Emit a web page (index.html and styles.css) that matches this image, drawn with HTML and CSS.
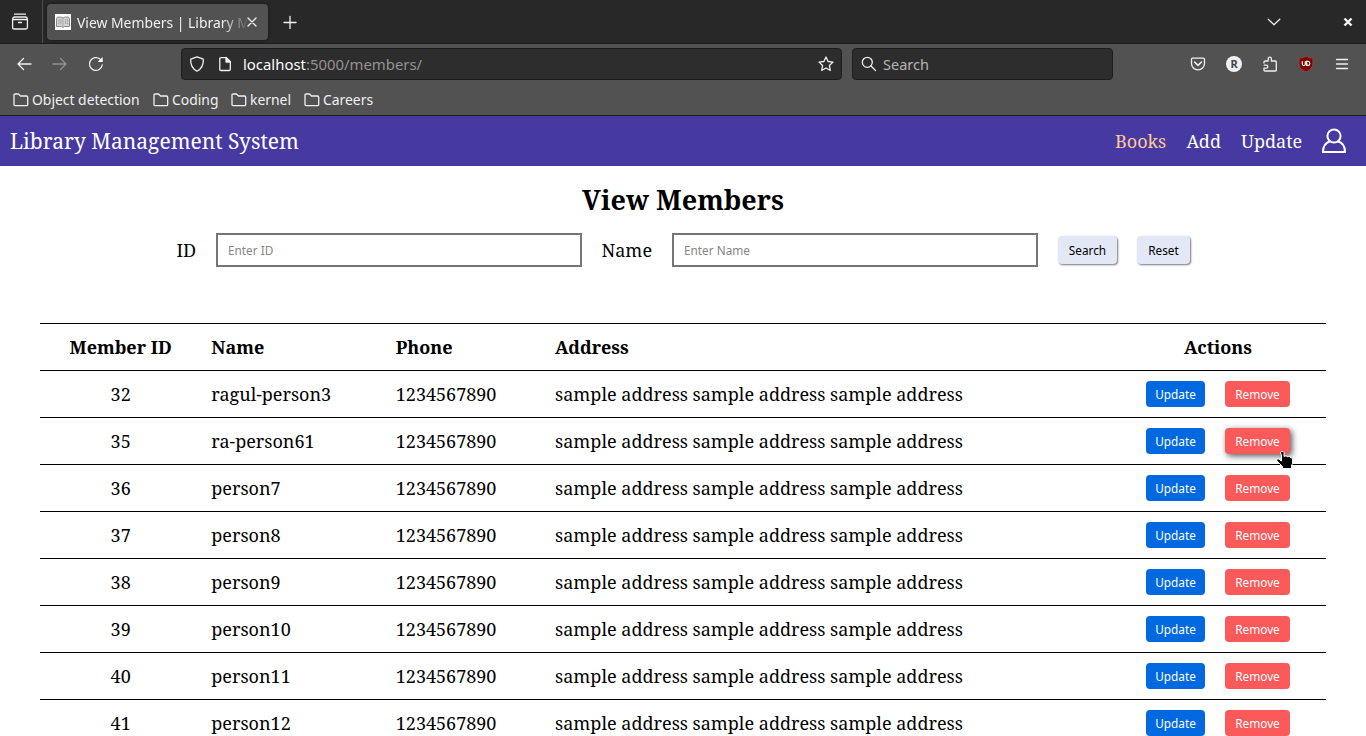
FILE: index.html
```html
<!DOCTYPE html>
<html lang="en">
<head>
<meta charset="utf-8">
<title>View Members | Library Management System</title>
<link rel="stylesheet" href="styles.css">
</head>
<body>
<header class="browser">
  <div class="tabbar">
    <div class="recent"><svg width="18" height="18" viewBox="0 0 18 18" class="ic"><path d="M3.500 1.200h11M1.800 6.500V5.500Q1.800 4 3.500 4h11Q16.200 4 16.200 5.500v1M1.600 6.500h14.800v8q0 1.500-1.500 1.500H3.100q-1.500 0-1.500-1.500zM7.500 9.500h3"/></svg></div>
    <div class="tab">
      <svg class="favicon" width="16" height="16" viewBox="0 0 16 16"><path fill="#fff" d="M0 0h16v16H0z"/><path fill="#d2d2d2" stroke="#8a8a8a" d="M1.500 4.500Q1.500 3 4 3q3 0 4 1 1-1 4-1 2.500 0 2.500 1.500v8H9.500L8 13.500 6.500 12.500h-5z"/><path stroke="#aaa" d="M8 4v9M4 5v5M6 5v5M10.500 5v5M12.500 5v5"/></svg>
      <span class="tab-title">View Members | Library M</span>
      <svg class="ic tab-close" width="10" height="10" viewBox="0 0 10 10"><path d="M1 1l8 8M9 1L1 9"/></svg>
    </div>
    <svg class="ic newtab" width="14" height="14" viewBox="0 0 14 14"><path d="M7 1.500v12M1 7.500h12"/></svg>
    <svg class="ic chevron" width="14" height="8" viewBox="0 0 14 8"><path d="M1.200 1.200L7 6.800l5.800-5.600"/></svg>
    <svg class="winclose" width="10" height="10" viewBox="0 0 10 10"><path d="M1.500 1.500l7 7M8.500 1.500l-7 7"/></svg>
  </div>
  <div class="toolbar">
    <div class="navs">
      <svg class="ic" width="16" height="16" viewBox="0 0 16 16"><path d="M15 8H2M7.500 2.500L2 8l5.500 5.500"/></svg>
      <svg class="ic dim" width="16" height="16" viewBox="0 0 16 16"><path d="M1 8h13M8.500 2.500L14 8l-5.500 5.500"/></svg>
      <svg class="ic" width="16" height="16" viewBox="0 0 16 16"><path d="M14.200 9A6.400 6.400 0 1 1 12 3.100L14 5"/><path d="M14.600 1v5H9.600z" fill="#fbfbfe" stroke="none"/></svg>
    </div>
    <div class="urlbar">
      <svg class="ic" width="16" height="16" viewBox="0 0 16 16"><path d="M8 .8L14.300 3.200Q14.800 11.500 8 15.200 1.200 11.500 1.700 3.200z"/></svg>
      <svg class="ic page" width="14" height="16" viewBox="0 0 14 16"><path d="M3 1.700h5.300l4 4v7.600q0 1.200-1.200 1.200H3q-1.200 0-1.200-1.200V2.900Q1.800 1.700 3 1.700z"/><path d="M8 1.500v4.500h4.500z" fill="#fbfbfe"/></svg>
      <span class="url">localhost<i>:5000/members/</i></span>
      <svg class="ic star" width="16" height="16" viewBox="0 0 16 16"><path d="M8 1l2.100 4.500 4.900.6-3.600 3.400.9 4.900L8 12l-4.300 2.400.9-4.900L1 6.100l4.900-.6z"/></svg>
    </div>
    <div class="searchbar">
      <svg class="ic" width="16" height="16" viewBox="0 0 16 16"><circle cx="6.300" cy="6.300" r="5"/><path d="M10 10l4.500 4.500"/></svg>
      <span class="search-text">Search</span>
    </div>
    <div class="exts">
      <svg class="ic" width="16" height="16" viewBox="0 0 16 16"><path d="M2.500 2.200h11q1 0 1 1V7.500a6.500 6.300 0 0 1-13 0V3.200q0-1 1-1z"/><path d="M4.500 6L8 9.300 11.500 6" stroke-width="1.600"/></svg>
      <svg width="16" height="16" viewBox="0 0 16 16"><circle cx="8" cy="8" r="8" fill="#f0f0f0"/><text x="8" y="12" class="badge-r">R</text></svg>
      <svg class="ic" width="16" height="16" viewBox="0 0 16 16"><path d="M2 7V6q0-1 1-1h3.200V3Q6.200 1.200 7.800 1.200T9.400 3v2h3.900q1 0 1 1v8.200q0 .8-1 .8H3q-1 0-1-.8v-2h2.200q1.600 0 1.600-1.500T4.200 9.200H2.200"/></svg>
      <svg width="16" height="16" viewBox="0 0 16 16"><path fill="#800000" stroke="#a24c4c" stroke-width=".6" d="M8 .5Q11 2 14.800 2.200V8q0 5-6.800 7.800Q1.200 13 1.200 8V2.200Q5 2 8 .5z"/><path fill="none" stroke="#fff" stroke-width="1.200" d="M4.300 5.300v3q0 1.200 1.500 1.200t1.500-1.200v-3M8.700 5.400h1.500q1.600 0 1.600 2t-1.600 2H8.700z"/></svg>
      <svg class="ic" width="16" height="16" viewBox="0 0 16 16"><path d="M2.500 3.500h11M2.500 8h11M2.500 12.500h11"/></svg>
    </div>
  </div>
  <nav class="bookmarks">
    <span class="bm b1"><svg class="ic" width="16" height="14" viewBox="0 0 16 14"><path d="M1 2.200Q1 1 2.200 1h3.300L7.500 3h6q1.200 0 1.200 1.200v7.300q0 1.200-1.200 1.200H2.200Q1 12.700 1 11.500z"/></svg><b>Object detection</b></span>
    <span class="bm b2"><svg class="ic" width="16" height="14" viewBox="0 0 16 14"><path d="M1 2.200Q1 1 2.200 1h3.300L7.500 3h6q1.200 0 1.200 1.200v7.300q0 1.200-1.200 1.200H2.200Q1 12.700 1 11.500z"/></svg><b>Coding</b></span>
    <span class="bm b3"><svg class="ic" width="16" height="14" viewBox="0 0 16 14"><path d="M1 2.200Q1 1 2.200 1h3.300L7.500 3h6q1.200 0 1.200 1.200v7.300q0 1.200-1.200 1.200H2.200Q1 12.700 1 11.500z"/></svg><b>kernel</b></span>
    <span class="bm b4"><svg class="ic" width="16" height="14" viewBox="0 0 16 14"><path d="M1 2.200Q1 1 2.200 1h3.300L7.500 3h6q1.200 0 1.200 1.200v7.300q0 1.200-1.200 1.200H2.200Q1 12.700 1 11.500z"/></svg><b>Careers</b></span>
  </nav>
</header>
<nav class="appbar">
  <span class="brand">Library Management System</span>
  <span class="link active l1">Books</span><span class="link l2">Add</span><span class="link l3">Update</span>
  <svg class="user" width="24" height="26" viewBox="0 0 24 26"><path fill="none" stroke="#fff" stroke-width="2" d="M8.500 13.200C3.500 14.500 1 18.500 1 24h22c0-5.500-2.500-9.500-7.500-10.800"/><circle cx="12" cy="8" r="6.600" fill="none" stroke="#fff" stroke-width="2"/></svg>
</nav>
<main>
  <h1>View Members</h1>
  <form class="filters">
    <label class="lid">ID</label><input class="field" placeholder="Enter ID">
    <label class="lname">Name</label><input class="field" placeholder="Enter Name">
    <button type="button" class="soft s1">Search</button><button type="button" class="soft s2">Reset</button>
  </form>
  <div class="table">
    <div class="row head"><span class="id">Member ID</span><span>Name</span><span>Phone</span><span>Address</span><span class="acts">Actions</span></div>
    <div class="row"><span class="id">32</span><span>ragul-person3</span><span>1234567890</span><span>sample address sample address sample address</span><span class="acts"><button class="up">Update</button><button class="rm">Remove</button></span></div>
    <div class="row"><span class="id">35</span><span>ra-person61</span><span>1234567890</span><span>sample address sample address sample address</span><span class="acts"><button class="up">Update</button><button class="rm hover">Remove</button></span></div>
    <div class="row"><span class="id">36</span><span>person7</span><span>1234567890</span><span>sample address sample address sample address</span><span class="acts"><button class="up">Update</button><button class="rm">Remove</button></span></div>
    <div class="row"><span class="id">37</span><span>person8</span><span>1234567890</span><span>sample address sample address sample address</span><span class="acts"><button class="up">Update</button><button class="rm">Remove</button></span></div>
    <div class="row"><span class="id">38</span><span>person9</span><span>1234567890</span><span>sample address sample address sample address</span><span class="acts"><button class="up">Update</button><button class="rm">Remove</button></span></div>
    <div class="row"><span class="id">39</span><span>person10</span><span>1234567890</span><span>sample address sample address sample address</span><span class="acts"><button class="up">Update</button><button class="rm">Remove</button></span></div>
    <div class="row"><span class="id">40</span><span>person11</span><span>1234567890</span><span>sample address sample address sample address</span><span class="acts"><button class="up">Update</button><button class="rm">Remove</button></span></div>
    <div class="row"><span class="id">41</span><span>person12</span><span>1234567890</span><span>sample address sample address sample address</span><span class="acts"><button class="up">Update</button><button class="rm">Remove</button></span></div>
  </div>
</main>
<svg class="cursor" width="18" height="19" viewBox="0 0 18 19"><path fill="#000" stroke="#fff" stroke-width="1" stroke-linejoin="round" d="M4.500 2.500L5.500 1.500H7L8 2.500V6.500L9 6H10.500L11.500 7 12.500 6.500H13.500L14.500 7.500H15.500L16.500 9V13.500L15.500 15.500V18.500H6.500V16.500L2.500 12.500 .8 10.500V9H3L5 11H5.500V6z"/></svg>
</body>
</html>
```

FILE: styles.css
```css
* { box-sizing: border-box; }
html, body { margin: 0; height: 736px; overflow: hidden; }
body { position: relative; background: #fff; color: #000; font-family: "Noto Serif", "Droid Serif", "DejaVu Serif", serif; font-size: 18px; }
svg { display: block; flex: none; }
span, label { white-space: nowrap; }

.browser { height: 116px; background: #525252; border-bottom: 1px solid #1b1b1b; font-family: "Noto Sans", sans-serif; color: #f0f0f0; }
.ic { fill: none; stroke: #f0f0f0; stroke-width: 1.300; stroke-linejoin: round; stroke-linecap: round; }
.dim { opacity: .4; }
.tabbar { height: 44px; background: #282828; border-bottom: 1px solid #1b1b1b; display: flex; align-items: center; }
.recent { width: 43px; height: 43px; border-right: 1px solid #4c4c4c; padding: 13px 0 0 11px; flex: none; }
.tab { width: 221px; height: 36px; margin-left: 4px; background: #525252; border-radius: 4px; display: flex; align-items: center; padding-left: 8px; box-shadow: 0 0 3px #151515; flex: none; }
.tab-title { width: 170px; margin-left: 6px; padding-top: 1px; font-size: 13.900px; -webkit-mask-image: linear-gradient(90deg, #000 145px, transparent 172px); }
.tab-close { margin-left: 0; }
.newtab { margin-left: 15px; }
.chevron { margin-left: auto; }
.winclose { margin: 0 13px 0 62px; fill: none; stroke: #f5f5f5; stroke-width: 2.400; }
.toolbar { height: 40px; display: flex; align-items: center; }
.navs { width: 181px; padding-left: 16px; display: flex; gap: 20px; flex: none; }
.urlbar, .searchbar { height: 32px; background: #2d2d2d; border: 1px solid #1d1d1d; border-radius: 4px; display: flex; align-items: center; flex: none; }
.urlbar { width: 661px; padding: 0 7px; }
.page { margin-left: 13px; }
.url { margin-left: 11px; font-size: 14.900px; color: #fbfbfe; }
.url i { font-style: normal; color: #939393; }
.star { margin-left: auto; }
.searchbar { width: 261px; margin-left: 10px; padding-left: 8px; }
.search-text { margin-left: 6px; font-size: 14.500px; color: #b5b5b5; }
.exts { margin-left: auto; padding-right: 16px; display: flex; gap: 20px; }
.badge-r { font: bold 11px "Noto Sans", sans-serif; text-anchor: middle; fill: #444; }
.bookmarks { height: 31px; padding-left: 13px; display: flex; align-items: center; font-size: 13.900px; }
.bm { display: flex; align-items: center; gap: 3px; flex: none; }
.bm b { font-weight: 400; }
.b1 { width: 140px; } .b2 { width: 78px; } .b3 { width: 73px; }

.appbar { height: 50px; background: #4639a2; color: #fff; display: flex; align-items: center; padding: 0 20px 0 10px; }
.brand { font-size: 21px; margin-right: auto; }
.link { margin-right: 20px; font-size: 18px; }
.active { color: #ffc996; }
.l1 { width: 51.500px; } .l2 { width: 34.500px; } .l3 { width: 61px; }

h1 { margin: 0; padding-top: 14px; height: 67px; line-height: 40px; font-size: 27px; text-align: center; }
.filters { height: 34px; margin: 0 0 56px; padding-left: 176.500px; display: flex; align-items: center; }
.lid { width: 39.500px; } .lname { width: 70.500px; margin-left: 19.500px; }
.field { width: 366px; height: 34px; border: 2px solid #767676; border-radius: 0; padding: 1px 10px; font: 11.800px "Noto Sans", sans-serif; margin: 0; flex: none; }
.field::placeholder { color: #858585; }
button { font: 11.800px "Noto Sans", sans-serif; border: 0; padding: 0; margin: 0; border-radius: 4px; flex: none; }
.soft { height: 28px; background: #e2e8f5; color: #000; box-shadow: 1px 1px 2px #777; }
.s1 { width: 59px; margin-left: 20px; } .s2 { width: 53px; margin-left: 20px; }

.table { margin: 0 40px; border-top: 1px solid #000; }
.row { height: 47px; display: grid; grid-template-columns: 171.300px 184.500px 159.300px 1fr 217px; align-items: center; border-bottom: 1px solid #000; }
.head { font-weight: 700; }
.id { text-align: center; padding-right: 10px; }
.acts { display: flex; justify-content: center; gap: 20px; }
.row .acts { padding-left: 1px; }
.up, .rm { height: 26px; color: #fff; }
.up { width: 59px; background: #0069df; }
.rm { width: 65px; background: #fb5a5a; }
.hover { box-shadow: 2px 2px 6px #555; }
.cursor { position: absolute; left: 1276px; top: 450px; }
```
